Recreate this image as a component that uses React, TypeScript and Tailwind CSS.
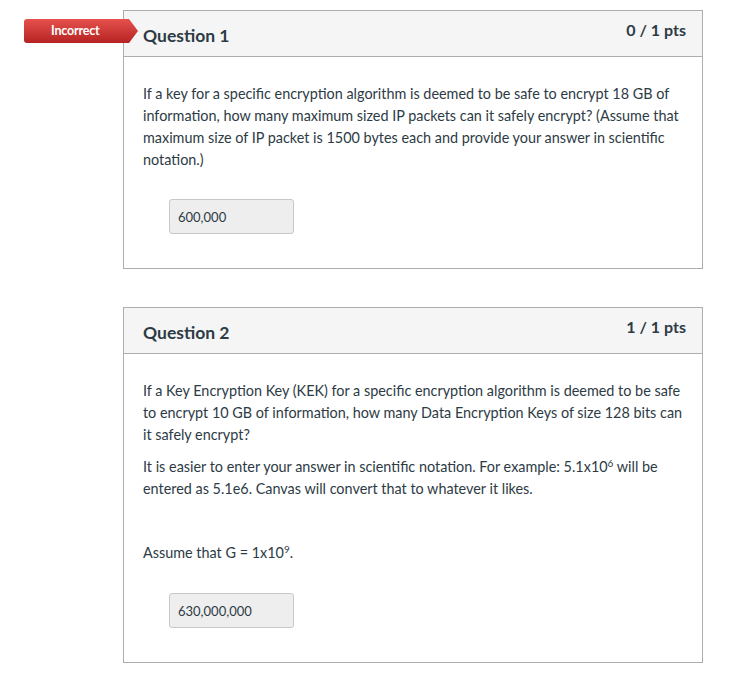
import React from "react";

function Answer({ value }: { value: string }) {
  return (
    <div className="ml-[26px] flex h-[35px] w-[125px] items-center rounded-[3px] border border-[#c8c8c8] bg-[#eeeeee] pl-[8px] text-[13px] text-[#2d3b45]">
      {value}
    </div>
  );
}

function Card({
  title,
  pts,
  children,
  badge,
}: {
  title: string;
  pts: string;
  children: React.ReactNode;
  badge?: boolean;
}) {
  return (
    <div className="relative w-[580px] border border-[#adadad] bg-white">
      {badge && (
        <div className="absolute left-[-100px] top-[8px] flex h-[24px] w-[114px] items-center rounded-l-[3px] bg-gradient-to-b from-[#e6504d] to-[#b52222] pl-[27px] text-[12.5px] font-bold tracking-[-0.2px] text-white [clip-path:polygon(0_0,105px_0,114px_50%,105px_100%,0_100%)]">
          Incorrect
        </div>
      )}
      <div className="flex h-[46px] justify-between border-b border-[#adadad] bg-[#f5f5f5] pl-[19px] pr-[16px]">
        <div className="pt-[12px] text-[17.5px] font-bold text-[#2d3b45]">{title}</div>
        <div className="pt-[7px] text-[16px] font-bold text-[#2d3b45]">{pts}</div>
      </div>
      <div className="px-[19px] pb-[34px] pt-[26px] text-[14.4px] leading-[22px] text-[#2d3b45]">
        {children}
      </div>
    </div>
  );
}

export default function App() {
  return (
    <div
      className="min-h-[679px] w-[756px] bg-white pl-[123px] pt-[10px]"
      style={{ fontFamily: "Lato, 'Noto Sans', sans-serif" }}
    >
      <Card title="Question 1" pts="0 / 1 pts" badge>
        <p className="pr-[2px]">
          If a key for a specific encryption algorithm is deemed to be safe to encrypt 18 GB of
          information, how many maximum sized IP packets can it safely encrypt? (Assume that
          maximum size of IP packet is 1500 bytes each and provide your answer in scientific
          notation.)
        </p>
        <div className="mt-[28px]">
          <Answer value="600,000" />
        </div>
      </Card>
      <div className="h-[38px]" />
      <Card title="Question 2" pts="1 / 1 pts">
        <p>
          If a Key Encryption Key (KEK) for a specific encryption algorithm is deemed to be safe
          to encrypt 10 GB of information, how many Data Encryption Keys of size 128 bits can
          it safely encrypt?
        </p>
        <p className="mt-[10px]">
          It is easier to enter your answer in scientific notation. For example: 5.1x10
          <sup className="text-[10px] leading-none">6</sup> will be entered as 5.1e6. Canvas will
          convert that to whatever it likes.
        </p>
        <p className="mt-[10px] h-[22px]">&nbsp;</p>
        <p className="mt-[10px]">
          Assume that G = 1x10<sup className="text-[10px] leading-none">9</sup>.
        </p>
        <div className="mt-[29px]">
          <Answer value="630,000,000" />
        </div>
      </Card>
    </div>
  );
}
